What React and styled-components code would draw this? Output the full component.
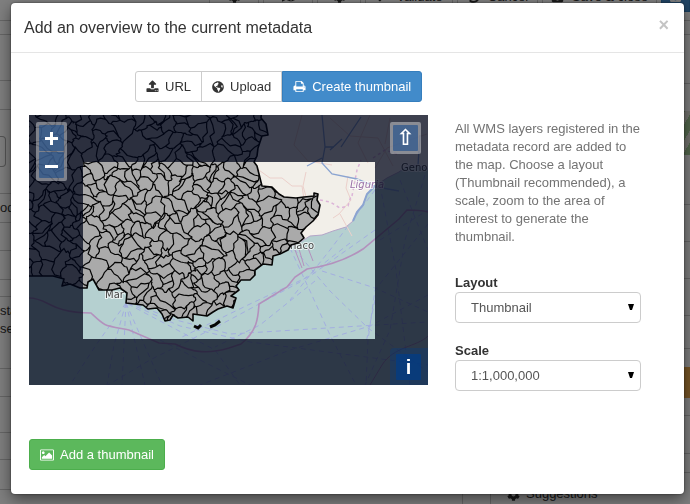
import React from "react";
import styled, { createGlobalStyle } from "styled-components";
import { FaGlobeAmericas, FaCog, FaCheck, FaUndo, FaSave, FaMap } from "react-icons/fa";

const GlobalStyle = createGlobalStyle`
  *, *::before, *::after { box-sizing: border-box; }
  body {
    margin: 0;
    background: #fff;
    color: #333;
    font: 13px/18px "Liberation Sans", Arial, sans-serif;
  }
  button, select { font: inherit; }
`;

/* ---------- page behind the dialog ---------- */

const Page = styled.div`
  position: fixed;
  inset: 0;
  overflow: hidden;
  display: flex;
  flex-direction: column;
  background: #fff;
`;

const Backdrop = styled.div`
  position: fixed;
  inset: 0;
  background: rgba(0, 0, 0, 0.5);
`;

const Toolbar = styled.div`
  display: flex;
  flex: none;
  justify-content: flex-end;
  align-items: flex-end;
  gap: 4px;
  height: 12px;
`;

const ToolButton = styled.button`
  display: flex;
  flex: none;
  align-items: center;
  justify-content: center;
  gap: 8px;
  width: ${(p) => p.$width}px;
  height: 31px;
  padding: 0 8px;
  border: 1px solid ${(p) => (p.$primary ? "#357ebd" : "#ccc")};
  background: ${(p) => (p.$primary ? "#428bca" : "#fff")};
  color: ${(p) => (p.$primary ? "#fff" : "#333")};
  white-space: nowrap;
`;

const Columns = styled.div`
  display: grid;
  flex: 1;
  grid-template-columns: minmax(0, 1fr) 28px 199px;
`;

const Column = styled.div`
  border-right: ${(p) => (p.$ruled ? "1px solid #ccc" : "0")};
`;

const Row = styled.div`
  height: ${(p) => p.$height}px;
  padding-top: ${(p) => p.$top || 0}px;
  border-bottom: 1px solid #ccc;
  overflow: hidden;
`;

const Field = styled.input`
  display: block;
  width: 6px;
  height: 31px;
  border: 1px solid #aaa;
  border-left: 0;
  border-radius: 0 4px 4px 0;
`;

const Thumb = styled.div`
  height: 44px;
  background: repeating-linear-gradient(120deg, #e6e6dc 0 6px, #a6cf9a 6px 14px);
`;

const Warning = styled.div`
  height: 31px;
  background: #f0ad4e;
`;

const Suggestions = styled.div`
  display: flex;
  align-items: center;
  gap: 6px;
  padding: 12px 16px;
`;

/* ---------- dialog ---------- */

const Dialog = styled.section`
  position: relative;
  margin: 3px 6px 10px 11px;
  background: #fff;
  border-radius: 4px;
  box-shadow: 0 5px 15px rgba(0, 0, 0, 0.5), 0 0 2px rgba(0, 0, 0, 0.6);
`;

const Header = styled.header`
  display: flex;
  align-items: flex-start;
  justify-content: space-between;
  padding: 13px 15px 12px 13px;
  border-bottom: 1px solid #e5e5e5;
`;

const Title = styled.h1`
  margin: 0;
  font-size: 16px;
  line-height: 24px;
  font-weight: 400;
`;

const Close = styled.button`
  padding: 0;
  border: 0;
  background: none;
  color: #c4c4c4;
  font-size: 18px;
  line-height: 18px;
  font-weight: 700;
  cursor: pointer;
`;

const Body = styled.div`
  padding: 18px 18px 24px;
`;

const Tabs = styled.div`
  display: flex;
  margin: 0 0 13px 106px;
`;

const Button = styled.button`
  display: flex;
  align-items: center;
  gap: 6px;
  height: 31px;
  padding: 0 10px;
  border: 1px solid ${(p) => p.$edge || "#ccc"};
  border-radius: 3px;
  background: ${(p) => p.$fill || "#fff"};
  color: ${(p) => (p.$fill ? "#fff" : "#333")};
  white-space: nowrap;
  cursor: pointer;

  ${Tabs} & { border-radius: 0; }
  ${Tabs} &:first-child { border-radius: 3px 0 0 3px; }
  ${Tabs} &:last-child { border-radius: 0 3px 3px 0; }
  ${Tabs} & + & { margin-left: -1px; }
`;

const Content = styled.div`
  display: grid;
  grid-template-columns: minmax(0, 1fr) 186px;
  gap: 27px;
  align-items: start;
  padding-right: 25px;
  margin-bottom: 29px;
`;

const Side = styled.div`
  padding-top: 5px;
`;

const Help = styled.p`
  margin: 0 0 28px;
  color: #737373;
`;

const Group = styled.div`
  position: relative;
  margin-bottom: 19px;
`;

const Label = styled.label`
  display: block;
  font-weight: 700;
`;

const Select = styled.select`
  display: block;
  width: 100%;
  height: 31px;
  padding: 0 15px;
  border: 1px solid #ccc;
  border-radius: 4px;
  background: #fff;
  color: #555;
  appearance: none;
`;

const Caret = styled.svg`
  position: absolute;
  right: 7px;
  bottom: 13px;
  width: 6px;
  height: 6px;
  pointer-events: none;
`;

const MapBox = styled.div`
  position: relative;
`;

const MapSvg = styled.svg`
  display: block;
  width: 100%;
  height: auto;
`;

const Control = styled.div`
  position: absolute;
  ${(p) => p.$place}
  display: grid;
  gap: 1px;
  padding: 3px;
  border-radius: 2px;
  background: rgba(255, 255, 255, 0.4);
`;

const Info = styled(Control)`
  padding: 6px 7px 5px 6px;
  border-radius: 4px 0 0;
  background: rgba(0, 60, 136, 0.3);
`;

const MapButton = styled.button`
  display: grid;
  place-items: center;
  width: 25px;
  height: 26px;
  padding: 0;
  border: 0;
  border-radius: 1px;
  background: rgba(0, 60, 136, ${(p) => (p.$solid ? 0.7 : 0.5)});
  color: #fff;
  font-size: 20px;
  font-weight: 700;
  line-height: 20px;
  cursor: pointer;
`;

const Sign = styled.svg`
  width: 13px;
  height: 13px;
`;

const Arrow = styled.span`
  font-family: "DejaVu Sans", sans-serif;
  font-size: 22px;
  font-weight: 700;
`;

const icons = {
  upload: {
    box: "0 0 1792 1792",
    d: "M1344 1472q0-26-19-45t-45-19-45 19-19 45 19 45 45 19 45-19 19-45zm256 0q0-26-19-45t-45-19-45 19-19 45 19 45 45 19 45-19 19-45zm128-224v320q0 40-28 68t-68 28h-1472q-40 0-68-28t-28-68v-320q0-40 28-68t68-28h427q21 56 70.5 92t110.5 36h256q61 0 110.5-36t70.5-92h427q40 0 68 28t28 68zm-325-648q-17 40-59 40h-256v448q0 26-19 45t-45 19h-256q-26 0-45-19t-19-45v-448h-256q-42 0-59-40-17-39 14-69l448-448q18-19 45-19t45 19l448 448q31 30 14 69z",
  },
  print: {
    box: "0 0 1792 1792",
    d: "M448 1536h896v-256h-896v256zm0-640h896v-384h-160q-40 0-68-28t-28-68v-160h-640v640zm1152 64q0-26-19-45t-45-19-45 19-19 45 19 45 45 19 45-19 19-45zm128 0v416q0 13-9.5 22.5t-22.5 9.5h-224v160q0 40-28 68t-68 28h-960q-40 0-68-28t-28-68v-160h-224q-13 0-22.5-9.5t-9.5-22.5v-416q0-79 56.5-135.5t135.5-56.5h64v-544q0-40 28-68t68-28h672q40 0 88 20t76 48l152 152q28 28 48 76t20 88v256h64q79 0 135.5 56.5t56.5 135.5z",
  },
  picture: {
    box: "-64 0 1920 1792",
    d: "M576 576q0 80-56 136t-136 56-136-56-56-136 56-136 136-56 136 56 56 136zm1024 384v448h-1408v-192l320-320 160 160 512-512zm96-704h-1600q-13 0-22.5 9.5t-9.5 22.5v1216q0 13 9.5 22.5t22.5 9.5h1600q13 0 22.5-9.5t9.5-22.5v-1216q0-13-9.5-22.5t-22.5-9.5zm160 32v1216q0 66-47 113t-113 47h-1600q-66 0-113-47t-47-113v-1216q0-66 47-113t113-47h1600q66 0 113 47t47 113z",
  },
};

const Icon = ({ name, size = 13 }) => (
  <svg viewBox={icons[name].box} width={size} height={size} fill="currentColor" aria-hidden="true">
    <path d={icons[name].d} />
  </svg>
);

/* ---------- municipality mesh ---------- */

function buildMesh() {
  let seed = 29;
  const random = () => {
    seed = (seed * 16807) % 2147483647;
    return seed / 2147483647;
  };
  const points = [];
  for (let y = 90; y < 346; y += 11) {
    for (let x = 6; x < 346; x += 11) {
      const west = x < 80 || y < 150;
      const plain = x > 76 && x < 98 && y > 238;
      if (plain || random() > (west ? 0.72 : 0.86)) continue;
      points.push([x + random() * 20, y + random() * 20]);
    }
  }
  const warp = ([x, y]) => [
    x + 3.5 * Math.sin(y * 0.19 + x * 0.07) + 1.4 * Math.sin(y * 0.55 - x * 0.31) + 0.5 * Math.sin(x + y * 1.3),
    y + 3.5 * Math.sin(x * 0.17 - y * 0.05) + 1.4 * Math.sin(x * 0.52 + y * 0.27) + 0.5 * Math.sin(y - x * 1.2),
  ];
  let d = "";
  for (const p of points) {
    let cell = [[p[0] - 24, p[1] - 24], [p[0] + 24, p[1] - 24], [p[0] + 24, p[1] + 24], [p[0] - 24, p[1] + 24]];
    for (const q of points) {
      const nx = q[0] - p[0];
      const ny = q[1] - p[1];
      if (q === p || nx * nx + ny * ny > 4600) continue;
      const limit = (q[0] * q[0] + q[1] * q[1] - p[0] * p[0] - p[1] * p[1]) / 2;
      const next = [];
      cell.forEach((a, i) => {
        const b = cell[(i + 1) % cell.length];
        const da = a[0] * nx + a[1] * ny - limit;
        const db = b[0] * nx + b[1] * ny - limit;
        if (da <= 0) next.push(a);
        if (da * db < 0) {
          const t = da / (da - db);
          next.push([a[0] + (b[0] - a[0]) * t, a[1] + (b[1] - a[1]) * t]);
        }
      });
      cell = next;
    }
    const outline = [];
    cell.forEach((a, i) => {
      const b = cell[(i + 1) % cell.length];
      for (let k = 0; k < 4; k += 1) {
        const v = warp([a[0] + ((b[0] - a[0]) * k) / 4, a[1] + ((b[1] - a[1]) * k) / 4]);
        outline.push(v.map((n) => n.toFixed(1)).join(" "));
      }
    });
    d += `M${outline.join("L")}Z`;
  }
  return d;
}

const mesh = buildMesh();

const region =
  "M20 105H262L261 118L266 124L268 135L262 136L258 148L257 156L254 162L257 166L261 182L262 186L272 187L279 194L284 197L296 198L304 197L314 196L314 193L318 194L317 200L320 205L318 215L313 221L306 227L301 233L304 238L298 243L291 245L288 250L280 254L273 256L272 265L263 264L255 270L255 275L250 280L241 280L236 286L239 290L231 296L236 298L233 308L227 306L218 309L213 312L207 316L193 314L193 321L188 317L178 318L173 315L170 320L165 321L162 314L157 308L148 309L143 305L126 303L127 293L120 288L112 290L99 290L93 279L88 282L87 288L80 288L70 284L62 286L64 279L53 276L20 276Z";

const land =
  "M250 105H440V172L428 169L418 165L407 166L399 172L387 178L375 186L367 194L363 205L357 212L353 221L346 227L333 231L322 235L310 236L302 241L290 247L250 235Z";

const ferries =
  "M126 303L96 345L70 385M126 303L114 345L107 385M126 303L122 385M126 303L145 385M126 303L162 385M128 302L176 320L230 334L360 326L428 322M128 303L180 326L250 342L428 365M128 304L215 350L240 385M290 248L310 291L330 335L356 385M294 249L330 291L368 328L428 372M428 224L375 290L368 340L366 385M350 243L300 282L220 325L150 360L108 385M375 230L310 276L250 304L180 338M315 281L260 325L215 347M425 175L405 240L390 330L365 385M375 190L330 250L290 300M380 185L396 270L410 385M322 271L375 288L428 312M428 295L370 326L290 350L200 385M375 300L366 343M160 340L250 385M400 180L428 250M380 240L428 210";

function OverviewMap() {
  return (
    <MapSvg viewBox="29 115 399 270" role="img" aria-label="Map preview">
      <defs>
        <clipPath id="region"><path d={region} /></clipPath>
      </defs>
      <path d="M29 115h399v270H29z" fill="#b5d0d0" />
      <path d={ferries} fill="none" stroke="#a3aee0" strokeWidth="1" strokeDasharray="5 4" />
      <g fill="none" stroke="#b391bd" strokeWidth="1.6">
        <path d="M29 298c20 0 20 15 62 15 15 14 12 12 38 17l30 13 16 1c18 9 34 10 54 4l12-4c17-14 17-27 18-40l28-17 8-10 12-8c26-4 44-12 56-20l36-30 8-9c10 0 17 1 21 2" />
        <path d="M370 385l12-20c12-19 35-18 46-29M295 250l7 18M299 249l5 17M308 248l5 13" strokeWidth="1" />
      </g>
      <path d={land} fill="#f2efe9" stroke="#b4a5c8" strokeWidth="1" />
      <path d="M256 168l14 10 12 0 10 8 10 0 3 20M306 172l-3 14 4 14 10 20M348 176l-2 12 5 12-12 14-6 4M340 214l12 22M302 115l-8 30 14 16 24 4M370 115l-12 28 10 20M375 168l12-20 40-14M330 118l20 18 28 2 15 28M390 118l-5 26" fill="none" stroke="#ecd0cb" strokeWidth="1" />
      <path d="M320 200l10 2 10 6 8-2 3-10M352 196l5-26 4-10M373 158l12-8 12 4" fill="none" stroke="#dcb4d8" strokeWidth="1.5" strokeDasharray="3 3" />
      <path d="M322 115l3 32-3 16 10 11 25 5 20 8 22 4M325 147h9M341 147l20-30M307 166l15-8M420 135l-2 30M330 150l12-11" fill="none" stroke="#8ba4d1" strokeWidth="1.3" />
      <path d="M375 186l-8 8-4 11-6 7-4 9" fill="none" stroke="#8ba4d1" strokeWidth="2" />
      <g fontFamily="DejaVu Sans, sans-serif" fontSize="10" stroke="#fff" strokeWidth="2" paintOrder="stroke" strokeOpacity="0.7">
        <text x="105" y="298" fill="#444">Mar</text>
        <text x="290" y="249" fill="#444">naco</text>
        <text x="350" y="188" fontStyle="italic" fill="#9a70a5">Liguria</text>
        <text x="401" y="171" fill="#444">Geno</text>
      </g>
      <path d={region} fill="#aaa" />
      <path d={mesh} clipPath="url(#region)" fill="none" stroke="#050505" strokeWidth="1.2" strokeLinejoin="round" />
      <path d={region} fill="none" stroke="#050505" strokeWidth="1.6" strokeLinejoin="round" />
      <path d="M194 326l4 2 3-3M210 327l5-2 5-4" fill="none" stroke="#050505" strokeWidth="3" />
      <path d="M29 115h399v270H29zM83 162v177h292V162z" fill="#000519" fillOpacity="0.75" fillRule="evenodd" />
    </MapSvg>
  );
}

const leftTop = [9, 14, 46, 29];
const leftMiddle = [28, 29, 17];
const leftBottom = [28, 36, 27, 30];

function SelectField({ id, label, options }) {
  return (
    <Group>
      <Label htmlFor={id}>{label}</Label>
      <Select id={id}>
        {options.map((option) => <option key={option}>{option}</option>)}
      </Select>
      <Caret viewBox="0 0 6 6" aria-hidden="true"><path d="M0 0h6L4 6H2z" fill="#000" /></Caret>
    </Group>
  );
}

export default function App() {
  return (
    <>
      <GlobalStyle />
      <Page aria-hidden="true">
        <Toolbar>
          <ToolButton $width={50}><FaCog /></ToolButton>
          <ToolButton $width={50}><FaMap /></ToolButton>
          <ToolButton $width={44}><FaCog /></ToolButton>
          <ToolButton $width={88}><FaCheck />Validate</ToolButton>
          <ToolButton $width={81}><FaUndo />Cancel</ToolButton>
          <ToolButton $width={115}><FaSave />Save &amp; close</ToolButton>
          <ToolButton $width={29} $primary><FaSave /></ToolButton>
        </Toolbar>
        <Columns>
          <Column $ruled>
            {leftTop.map((height) => <Row key={height} $height={height} />)}
            <Row $height={84} $top={26}><Field tabIndex={-1} /></Row>
            <Row $height={29} $top={5}>od</Row>
            {leftMiddle.map((height) => <Row key={height} $height={height} />)}
            <Row $height={72} $top={5}>sta<br />se</Row>
            {leftBottom.map((height) => <Row key={height} $height={height} />)}
          </Column>
          <Column $ruled />
          <Column>
            <Row $height={9} />
            <Row $height={14} />
            <Row $height={49} />
            <Row $height={121} $top={27}><Thumb /></Row>
            <Row $height={37} />
            <Row $height={37} />
            <Row $height={37} />
            <Row $height={33} />
            <Row $height={67} $top={18}><Warning /></Row>
            <Row $height={38} />
            <Row $height={19} />
            <Suggestions><FaCog />Suggestions</Suggestions>
          </Column>
        </Columns>
      </Page>
      <Backdrop />
      <Dialog role="dialog" aria-labelledby="dialog-title">
        <Header>
          <Title id="dialog-title">Add an overview to the current metadata</Title>
          <Close aria-label="Close">×</Close>
        </Header>
        <Body>
          <Tabs>
            <Button><Icon name="upload" />URL</Button>
            <Button><FaGlobeAmericas size={12} />Upload</Button>
            <Button $fill="#428bca" $edge="#357ebd"><Icon name="print" />Create thumbnail</Button>
          </Tabs>
          <Content>
            <MapBox>
              <OverviewMap />
              <Control $place="top: 7px; left: 7px;">
                <MapButton aria-label="Zoom in">
                  <Sign viewBox="0 0 13 13"><path d="M5 0h3v5h5v3H8v5H5V8H0V5h5z" fill="#fff" /></Sign>
                </MapButton>
                <MapButton aria-label="Zoom out">
                  <Sign viewBox="0 0 13 13"><path d="M0 6h13v3H0z" fill="#fff" /></Sign>
                </MapButton>
              </Control>
              <Control $place="top: 7px; right: 7px;">
                <MapButton aria-label="Reset north"><Arrow>⇧</Arrow></MapButton>
              </Control>
              <Info $place="right: 0; bottom: 0;">
                <MapButton $solid aria-label="Attributions">i</MapButton>
              </Info>
            </MapBox>
            <Side>
              <Help>
                All WMS layers registered in the metadata record are added to the map. Choose a layout
                (Thumbnail recommended), a scale, zoom to the area of interest to generate the thumbnail.
              </Help>
              <SelectField id="layout" label="Layout" options={["Thumbnail"]} />
              <SelectField id="scale" label="Scale" options={["1:1,000,000"]} />
            </Side>
          </Content>
          <Button $fill="#5cb85c" $edge="#4cae4c"><Icon name="picture" size={14} />Add a thumbnail</Button>
        </Body>
      </Dialog>
    </>
  );
}
